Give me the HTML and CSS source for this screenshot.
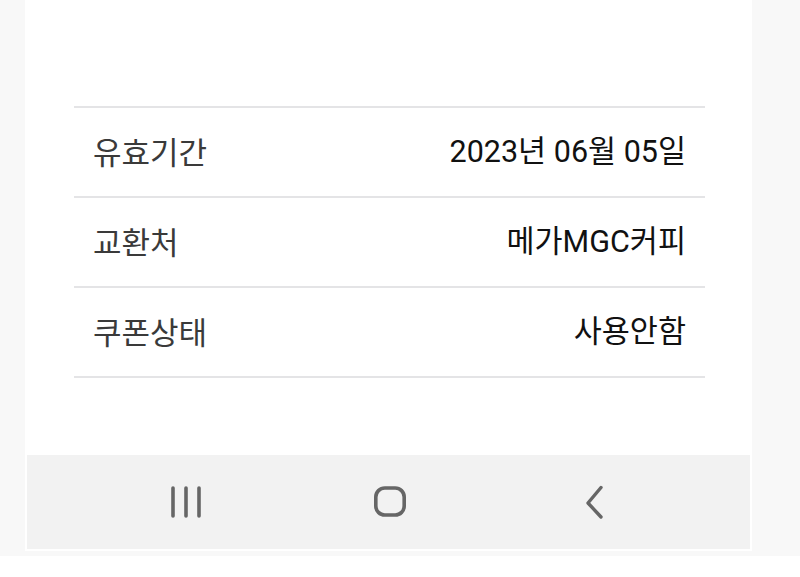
FILE: index.html
```html
<!DOCTYPE html>
<html lang="ko">
<head>
<meta charset="utf-8">
<link rel="stylesheet" href="styles.css">
</head>
<body>
<div class="screen">
  <div class="card">
    <div class="content">
      <div class="row"><span class="label">유효기간</span><span class="value">2023년 06월 05일</span></div>
      <div class="row"><span class="label">교환처</span><span class="value">메가MGC커피</span></div>
      <div class="row"><span class="label">쿠폰상태</span><span class="value">사용안함</span></div>
    </div>
    <div class="navbar">
      <svg class="icon" width="34" height="34" viewBox="0 0 34 34">
        <g stroke="#666666" stroke-width="3.6" stroke-linecap="round">
          <line x1="4" y1="3" x2="4" y2="31"/>
          <line x1="17" y1="3" x2="17" y2="31"/>
          <line x1="30" y1="3" x2="30" y2="31"/>
        </g>
      </svg>
      <svg class="icon" width="34" height="34" viewBox="0 0 34 34">
        <rect x="2.8" y="3" width="28.4" height="27" rx="9" fill="none" stroke="#666666" stroke-width="3.6"/>
      </svg>
      <svg class="icon" width="34" height="34" viewBox="0 0 34 34">
        <polyline points="24,2.5 11,18 24,32" fill="none" stroke="#666666" stroke-width="3.4" stroke-linecap="round" stroke-linejoin="round"/>
      </svg>
    </div>
  </div>
</div>
</body>
</html>
```

FILE: styles.css
```css
html, body {
  margin: 0;
  padding: 0;
  background: #ffffff;
}
body {
  font-family: Roboto, "Noto Sans CJK KR", sans-serif;
  width: 800px;
  height: 577px;
  overflow: hidden;
}
.screen {
  background: #f8f8f8;
  height: 556px;
  padding: 0 48px 0 25px;
}
.card {
  background: #ffffff;
  height: 551px;
  display: flex;
  flex-direction: column;
}
.content {
  height: 455px;
  box-sizing: border-box;
  padding: 106px 47px 0 49px;
}
.row {
  height: 90px;
  box-sizing: border-box;
  border-top: 2px solid #e4e4e6;
  display: flex;
  align-items: center;
  justify-content: space-between;
  padding: 0 19px 0 19px;
}
.row:last-child {
  border-bottom: 2px solid #e4e4e6;
  height: 92px;
}
.label {
  font-family: "Noto Sans CJK KR", sans-serif;
  font-size: 31px;
  color: #3a3a3a;
  line-height: 1;
  margin-top: -3px;
}
.value {
  font-size: 30.5px;
  color: #111111;
  line-height: 1;
}
.navbar {
  margin: 0 2px;
  height: 94px;
  background: #f2f2f2;
  display: flex;
  align-items: center;
  gap: 170px;
  padding: 0 0 0 142px;
}
.icon {
  display: block;
}
```
